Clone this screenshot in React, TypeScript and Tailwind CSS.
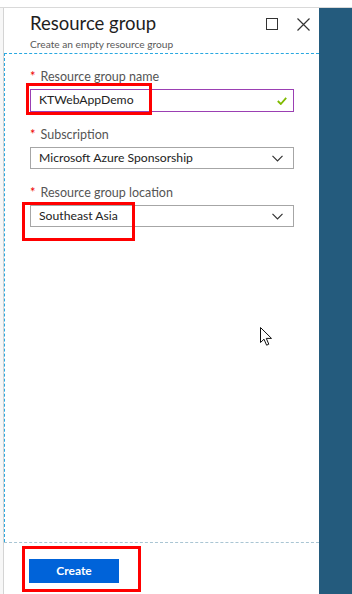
import React from 'react';

const Chevron = () => (
  <svg width="11" height="7" viewBox="0 0 11 7" className="shrink-0">
    <path d="M0.5 0.8 L5.5 5.8 L10.5 0.8" fill="none" stroke="#333" strokeWidth="1.2" />
  </svg>
);

const Label = ({ text }: { text: string }) => (
  <div className="flex items-start gap-[5px] text-[12.5px] leading-[16px] text-[#555]">
    <span className="text-[#e00] text-[13px] leading-[14px]">*</span>
    <span>{text}</span>
  </div>
);

const Select = ({ value }: { value: string }) => (
  <div className="h-[22px] border border-[#a6a6a6] flex items-center justify-between pl-[8px] pr-[10px] text-[12.2px] text-[#222]">
    <span>{value}</span>
    <Chevron />
  </div>
);

export default function App() {
  return (
    <div className="w-[352px] h-[594px] bg-white flex flex-col overflow-hidden" style={{ fontFamily: 'Lato, "Open Sans", sans-serif' }}>
      <div className="h-[8px] shrink-0 border-b border-[#d9d9d9]" />
      <div className="flex flex-1 min-h-0">
        <div className="w-[4px] shrink-0 bg-[#f7f7f7] border-r border-[#d4d4d4]" />
        <div className="flex-1 flex flex-col relative">
          {/* header */}
          <div className="h-[45px] shrink-0 pl-[26px] pr-[9px] pt-[3px] flex justify-between">
            <div>
              <div className="text-[18.5px] leading-[24px] text-[#1e1e1e]">Resource group</div>
              <div className="text-[10.2px] leading-[14px] text-[#595959] mt-[2px]">Create an empty resource group</div>
            </div>
            <div className="flex items-start gap-[19px] pt-[7px]">
              <div className="w-[12px] h-[12px] border border-[#333]" />
              <svg width="13" height="13" viewBox="0 0 13 13">
                <path d="M0.5 0.5 L12.5 12.5 M12.5 0.5 L0.5 12.5" stroke="#333" strokeWidth="1.2" />
              </svg>
            </div>
          </div>

          {/* body */}
          <div className="flex-1 border-t border-l border-dashed border-[#29a8e0] border-b-0 relative">
            <div className="pl-[25px] pr-[25px] pt-[15px] flex flex-col">
              <Label text="Resource group name" />
              <div className="relative mt-[4px] h-[23px] border border-[#9b3fb3] flex items-center justify-between pl-[8px] pr-[6px] text-[12.2px] text-[#222]">
                <span>KTWebAppDemo</span>
                <svg width="10" height="8" viewBox="0 0 10 8">
                  <path d="M0.8 4 L3.8 7 L9.2 0.8" fill="none" stroke="#7fba00" strokeWidth="1.8" />
                </svg>
                <div className="absolute left-[-5px] top-[-7px] w-[126px] h-[32px] border-[3px] border-[#ff0000]" />
              </div>

              <div className="mt-[15px]">
                <Label text="Subscription" />
              </div>
              <div className="mt-[4px]">
                <Select value="Microsoft Azure Sponsorship" />
              </div>

              <div className="mt-[16px]">
                <Label text="Resource group location" />
              </div>
              <div className="mt-[4px] relative">
                <Select value="Southeast Asia" />
                <div className="absolute left-[-8px] top-[-3px] w-[113px] h-[39px] border-[3px] border-[#ff0000]" />
              </div>
            </div>

            {/* mouse cursor */}
            <svg className="absolute left-[255px] top-[273px]" width="13" height="20" viewBox="0 0 13 20">
              <path d="M0.5 0.5 L0.5 15.5 L4 12.2 L6.6 18.2 L8.8 17.2 L6.3 11.4 L11.5 11.4 Z" fill="#fff" stroke="#111" strokeWidth="1" strokeLinejoin="miter" />
            </svg>
          </div>

          {/* footer */}
          <div className="h-[52px] shrink-0 border-t border-dashed border-[#a9c5d3] pl-[25px] pt-[16px] relative">
            <div className="w-[90px] h-[24px] bg-[#0063d9] flex items-center justify-center text-white text-[12px] font-bold">
              Create
            </div>
            <div className="absolute left-[18px] top-[3px] w-[119px] h-[46px] border-[3px] border-[#ff0000]" />
          </div>
        </div>
        <div className="w-[33px] shrink-0 bg-[#245b7d]" />
      </div>
    </div>
  );
}
